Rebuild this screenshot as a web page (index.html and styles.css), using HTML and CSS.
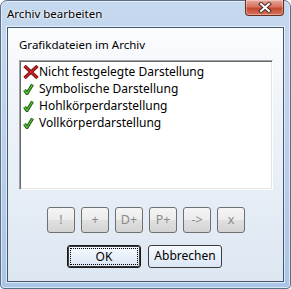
FILE: index.html
```html
<!DOCTYPE html>
<html lang="de">
<head>
    <meta charset="UTF-8">
    <title>Archiv bearbeiten</title>
    <link rel="stylesheet" href="styles.css">
</head>
<body>
    <div class="window">
        <div class="titlebar">
            <span class="title">Archiv bearbeiten</span>
            <div class="close">
                <svg width="14" height="11" viewBox="0 0 14 11">
                    <path d="M3 2 L11 9 M11 2 L3 9" stroke="#4a2a24" stroke-width="4" stroke-linecap="square"/>
                    <path d="M3 2 L11 9 M11 2 L3 9" stroke="#ffffff" stroke-width="2" stroke-linecap="square"/>
                </svg>
            </div>
        </div>
        <div class="client">
            <div class="label">Grafikdateien im Archiv</div>
            <div class="list">
                <div class="row">
                    <span class="icon">
                        <svg width="16" height="14" viewBox="0 0 16 14">
                            <path d="M1.5 1 L14.5 13 M14.5 1 L1.5 13" stroke="#7a0d0d" stroke-width="3.4"/>
                            <path d="M1.5 1 L14.5 13 M14.5 1 L1.5 13" stroke="#c8262a" stroke-width="1.6"/>
                        </svg>
                    </span>
                    Nicht festgelegte Darstellung
                </div>
                <div class="row">
                    <span class="icon"><svg width="11" height="12" viewBox="0 0 11 12"><path d="M1.5 7 L4 10.5 L9.5 1.5" fill="none" stroke="#1d4d12" stroke-width="3.2"/><path d="M1.5 7 L4 10.5 L9.5 1.5" fill="none" stroke="#52c830" stroke-width="1.4"/></svg></span>
                    Symbolische Darstellung
                </div>
                <div class="row">
                    <span class="icon"><svg width="11" height="12" viewBox="0 0 11 12"><path d="M1.5 7 L4 10.5 L9.5 1.5" fill="none" stroke="#1d4d12" stroke-width="3.2"/><path d="M1.5 7 L4 10.5 L9.5 1.5" fill="none" stroke="#52c830" stroke-width="1.4"/></svg></span>
                    Hohlkörperdarstellung
                </div>
                <div class="row">
                    <span class="icon"><svg width="11" height="12" viewBox="0 0 11 12"><path d="M1.5 7 L4 10.5 L9.5 1.5" fill="none" stroke="#1d4d12" stroke-width="3.2"/><path d="M1.5 7 L4 10.5 L9.5 1.5" fill="none" stroke="#52c830" stroke-width="1.4"/></svg></span>
                    Vollkörperdarstellung
                </div>
            </div>
            <div class="tools">
                <div class="tool">!</div>
                <div class="tool">+</div>
                <div class="tool">D+</div>
                <div class="tool">P+</div>
                <div class="tool">-&gt;</div>
                <div class="tool">x</div>
            </div>
            <div class="actions">
                <div class="button default"><span class="focus">OK</span></div>
                <div class="button">Abbrechen</div>
            </div>
        </div>
    </div>
</body>
</html>
```

FILE: styles.css
```css
body {
    margin: 0;
    background-color: #ffffff;
    font-family: "Noto Sans", "Liberation Sans", sans-serif;
    font-size: 12px;
    color: #000;
}
.window {
    width: 291px;
    height: 289px;
    box-sizing: border-box;
    border: 1px solid #5d6f86;
    border-radius: 7px 7px 4px 4px;
    background: linear-gradient(to bottom, #c5d8ee 0%, #bcd2ec 40%, #a9c6e6 100%);
    box-shadow: inset 0 0 0 1px rgba(255,255,255,0.55);
    display: flex;
    flex-direction: column;
}
.titlebar {
    height: 26px;
    display: flex;
    justify-content: space-between;
    align-items: flex-start;
}
.title {
    padding: 4px 0 0 6px;
    line-height: 17px;
    font-size: 11.5px;
    text-shadow: 0 0 4px #ffffff, 0 0 2px #ffffff;
}
.close {
    width: 39px;
    height: 16px;
    margin: -1px 6px 0 0;
    box-sizing: border-box;
    border: 1px solid #6a2b21;
    border-top: none;
    border-radius: 0 0 4px 4px;
    background: linear-gradient(to bottom, #e9a99a 0%, #d7735f 45%, #c24a32 55%, #d4735c 100%);
    box-shadow: inset 0 0 0 1px rgba(255,255,255,0.35);
    display: flex;
    justify-content: center;
    align-items: center;
}
.client {
    flex: 1;
    margin: 0 6px 6px 6px;
    border: 1px solid #45566c;
    background: linear-gradient(to bottom, #fbfcfe 0%, #eef3f9 35%, #dde7f2 100%);
    box-shadow: 0 0 0 1px rgba(255,255,255,0.6);
    padding: 9px 0 0 11px;
}
.label {
    line-height: 16px;
    font-size: 11.5px;
    margin-bottom: 7px;
}
.list {
    width: 254px;
    height: 130px;
    box-sizing: border-box;
    background-color: #fff;
    border-top: 1px solid #a0a0a0;
    border-left: 1px solid #a0a0a0;
    border-right: 1px solid #ffffff;
    border-bottom: 1px solid #ffffff;
    box-shadow: inset 1px 1px 0 #696969, inset -1px -1px 0 #e3e3e3;
    padding: 2px 0 0 2px;
}
.row {
    height: 17px;
    line-height: 17px;
    display: flex;
    align-items: center;
    white-space: nowrap;
}
.icon {
    width: 16px;
    height: 17px;
    padding-left: 1px;
    display: flex;
    align-items: center;
    flex-shrink: 0;
}
.icon svg {
    display: block;
}
.tools {
    display: flex;
    gap: 6px;
    margin: 17px 0 0 28px;
}
.tool {
    width: 28px;
    height: 26px;
    box-sizing: border-box;
    border: 1px solid #707070;
    border-radius: 3px;
    background: linear-gradient(to bottom, #f4f4f4 0%, #ececec 50%, #e0e0e0 51%, #d3d3d3 100%);
    color: #8a8a8a;
    font-size: 12.5px;
    text-align: center;
    line-height: 23px;
}
.actions {
    display: flex;
    gap: 7px;
    margin: 12px 0 0 48px;
}
.button {
    width: 74px;
    height: 23px;
    box-sizing: border-box;
    border: 1px solid #3c3c3c;
    border-radius: 3px;
    background: linear-gradient(to bottom, #f5f9fe 0%, #e8f0fa 50%, #dbe6f4 100%);
    text-align: center;
    line-height: 20px;
}
.default {
    border-color: #1a1a1a;
    box-shadow: inset 0 0 0 1px #3c3c3c;
    padding: 2px;
    line-height: 16px;
}
.focus {
    display: block;
    height: 17px;
    box-sizing: border-box;
    border: 1px dotted #000;
}
```
